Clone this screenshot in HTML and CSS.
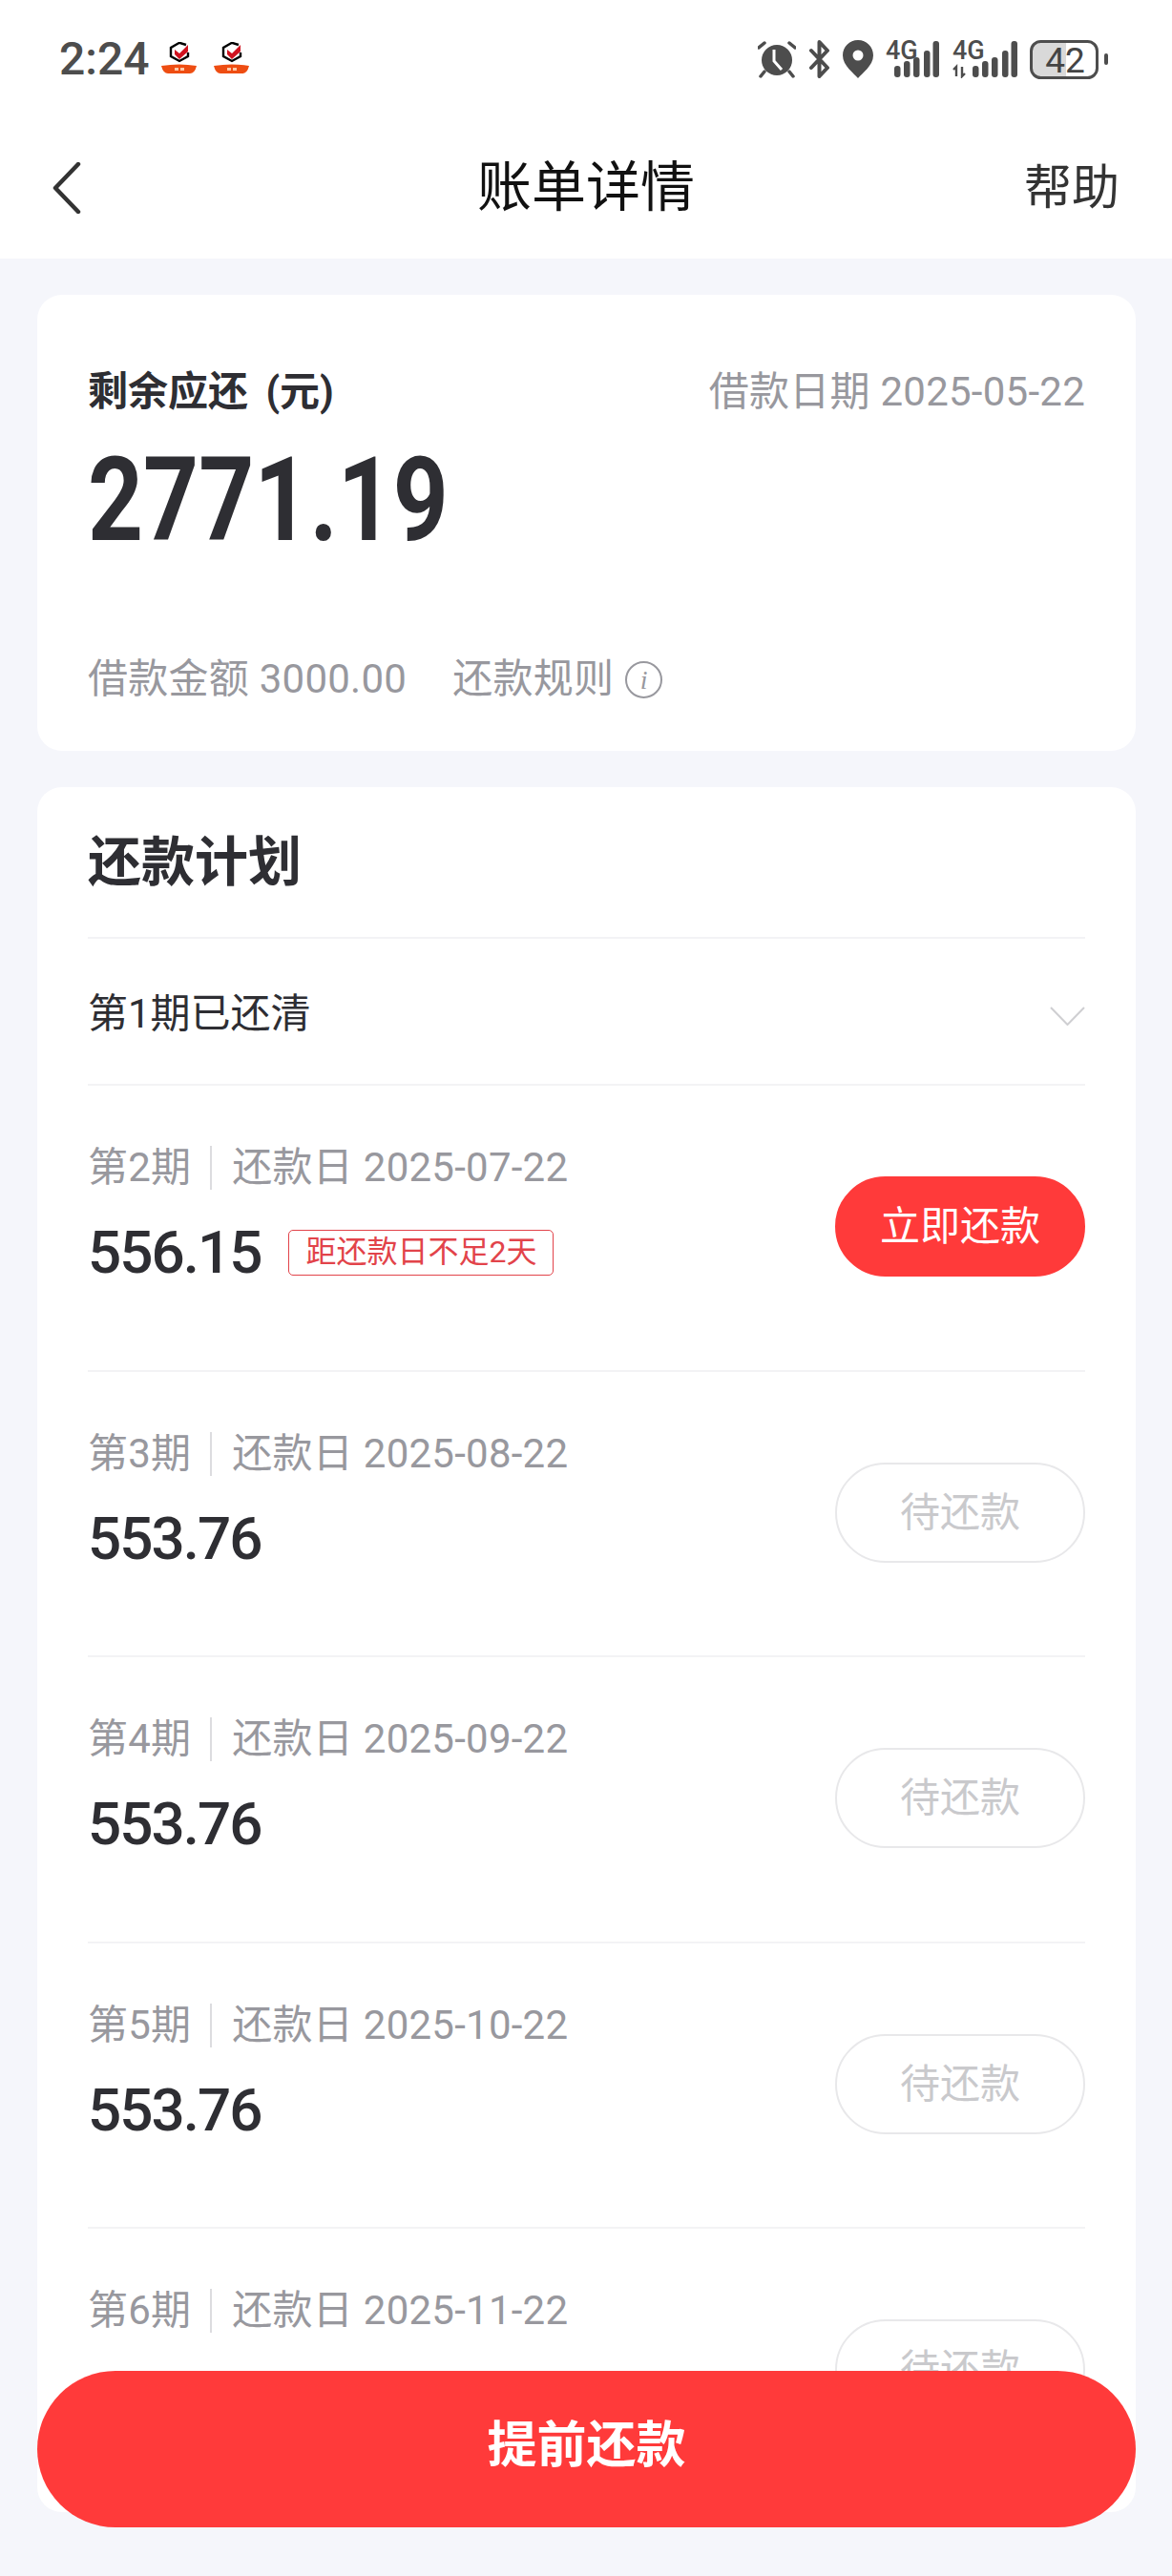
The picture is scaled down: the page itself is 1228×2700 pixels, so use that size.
FILE: index.html
```html
<!DOCTYPE html>
<html lang="zh-CN">
<head>
	<meta charset="UTF-8">
	<title>账单详情</title>
	<link rel="stylesheet" href="styles.css">
</head>
<body>
	<div class="page">
		<div class="head">
			<div class="status">
				<div class="statusLeft">
					<span class="time">2:24</span>
					<svg class="badge" width="38" height="36" viewBox="0 0 38 36">
						<path d="M26 3 19 0.8 10 6V15L19 20 28 15V11" fill="none" stroke="#000" stroke-width="2.4"/>
						<path d="M14 8 19 12 28 3V10L19 18 14 13Z" fill="#d0121f"/>
						<path d="M0 25Q19 22 37 25 35 33 30 33H7Q2 33 0 25Z" fill="#ee4d12"/>
						<path d="M14 27h4v3h-4zM20 27h4v3h-4z" fill="#ffc9a8"/>
					</svg>
					<svg class="badge" width="38" height="36" viewBox="0 0 38 36">
						<path d="M26 3 19 0.8 10 6V15L19 20 28 15V11" fill="none" stroke="#000" stroke-width="2.4"/>
						<path d="M14 8 19 12 28 3V10L19 18 14 13Z" fill="#d0121f"/>
						<path d="M0 25Q19 22 37 25 35 33 30 33H7Q2 33 0 25Z" fill="#ee4d12"/>
						<path d="M14 27h4v3h-4zM20 27h4v3h-4z" fill="#ffc9a8"/>
					</svg>
				</div>
				<div class="statusRight">
					<svg width="40" height="40" viewBox="0 0 40 40">
						<circle cx="20" cy="21" r="16" fill="#4d4d4d"/>
						<path d="M17 10V22L25 31" fill="none" stroke="#fff" stroke-width="3"/>
						<path d="M1 8 7 3M33 3 39 8M7 33 3 38M33 33 37 38" fill="none" stroke="#4d4d4d" stroke-width="3.5" stroke-linecap="round"/>
					</svg>
					<svg width="23" height="40" viewBox="0 0 23 40">
						<path d="M3 11 20 29 11.5 38V2L20 11 3 29" fill="none" stroke="#4d4d4d" stroke-width="4" stroke-linejoin="round" stroke-linecap="round"/>
					</svg>
					<svg width="32" height="40" viewBox="0 0 32 40">
						<path d="M16 0C7 0 0 7 0 16 0 27 12 35 16 40 20 35 32 27 32 16 32 7 25 0 16 0Z" fill="#4d4d4d"/>
						<circle cx="16" cy="16" r="5.500" fill="#fff"/>
					</svg>
					<svg class="net" width="56" height="50" viewBox="0 -10 56 50">
						<text class="netText" x="0" y="20">4G</text>
						<rect x="9" y="27" width="6.500" height="12" rx="3" fill="#4d4d4d"/>
						<rect x="19" y="22" width="6.500" height="17" rx="3" fill="#4d4d4d"/>
						<rect x="29" y="18" width="6.500" height="21" rx="3" fill="#4d4d4d"/>
						<rect x="40" y="11" width="6.500" height="28" rx="3" fill="#4d4d4d"/>
						<rect x="49.500" y="1" width="6.500" height="38" rx="3" fill="#4d4d4d"/>
					</svg>
					<svg class="net" width="69" height="50" viewBox="0 -10 69 50">
						<text class="netText" x="1" y="20">4G</text>
						<path d="M5 38V28L2 31M11 28V38L14 35" fill="none" stroke="#4d4d4d" stroke-width="2.400"/>
						<rect x="22" y="27" width="6.500" height="12" rx="3" fill="#4d4d4d"/>
						<rect x="32" y="22" width="6.500" height="17" rx="3" fill="#4d4d4d"/>
						<rect x="42" y="18" width="6.500" height="21" rx="3" fill="#4d4d4d"/>
						<rect x="53" y="11" width="6.500" height="28" rx="3" fill="#4d4d4d"/>
						<rect x="62.500" y="1" width="6.500" height="38" rx="3" fill="#4d4d4d"/>
					</svg>
					<svg width="82" height="41" viewBox="0 0 82 41">
						<path d="M11 2H38V39H11A9 9 0 0 1 2 30V11A9 9 0 0 1 11 2Z" fill="#d9d9d9"/>
						<rect x="1.500" y="1.500" width="69" height="38" rx="10" fill="none" stroke="#4d4d4d" stroke-width="3"/>
						<text class="batText" x="37" y="33.500" text-anchor="middle">42</text>
						<rect x="78" y="14" width="4" height="12" rx="2" fill="#4d4d4d"/>
					</svg>
				</div>
			</div>
			<div class="nav">
				<svg class="back" width="30" height="54" viewBox="0 0 30 54">
					<path d="M27 2 3 27 27 52" fill="none" stroke="#333" stroke-width="4.500" stroke-linecap="round" stroke-linejoin="round"/>
				</svg>
				<div class="navTitle">账单详情</div>
				<div class="navHelp">帮助</div>
			</div>
		</div>

		<div class="main">
			<div class="card sumCard">
				<div class="sumTop">
					<span class="sumLabel">剩余应还 (元)</span>
					<span class="gray">借款日期 2025-05-22</span>
				</div>
				<div class="sumNum">2771.19</div>
				<div class="sumBottom">
					<span class="gray">借款金额 3000.00</span>
					<span class="gray rule">还款规则</span>
					<span class="info">i</span>
				</div>
			</div>

			<div class="card planCard">
				<div class="planTitle">还款计划</div>
				<div class="foldRow">
					<span>第1期已还清</span>
					<svg class="fold" width="37" height="20" viewBox="0 0 37 20">
						<path d="M1 1 18.500 19 36 1" fill="none" stroke="#cfcfd2" stroke-width="2"/>
					</svg>
				</div>

				<div class="row">
					<div class="rowLeft">
						<div class="rowLabel gray">第2期<i class="sep"></i>还款日 2025-07-22</div>
						<div class="rowAmount"><b>556.15</b><span class="tag">距还款日不足2天</span></div>
					</div>
					<div class="rowBtn on">立即还款</div>
				</div>
				<div class="row">
					<div class="rowLeft">
						<div class="rowLabel gray">第3期<i class="sep"></i>还款日 2025-08-22</div>
						<div class="rowAmount"><b>553.76</b></div>
					</div>
					<div class="rowBtn">待还款</div>
				</div>
				<div class="row">
					<div class="rowLeft">
						<div class="rowLabel gray">第4期<i class="sep"></i>还款日 2025-09-22</div>
						<div class="rowAmount"><b>553.76</b></div>
					</div>
					<div class="rowBtn">待还款</div>
				</div>
				<div class="row">
					<div class="rowLeft">
						<div class="rowLabel gray">第5期<i class="sep"></i>还款日 2025-10-22</div>
						<div class="rowAmount"><b>553.76</b></div>
					</div>
					<div class="rowBtn">待还款</div>
				</div>
				<div class="row">
					<div class="rowLeft">
						<div class="rowLabel gray">第6期<i class="sep"></i>还款日 2025-11-22</div>
						<div class="rowAmount"><b>553.76</b></div>
					</div>
					<div class="rowBtn">待还款</div>
				</div>
			</div>
		</div>

		<div class="payBtn">提前还款</div>
	</div>
</body>
</html>
```
FILE: styles.css
```css
*{box-sizing: border-box;}
body{margin: 0;background: #f5f6fb;font-family: Roboto, "Noto Sans CJK SC", sans-serif;color: #2e2e33;}
.page{width: 1228px;height: 2700px;position: relative;overflow: hidden;}

.head{background: #fff;height: 271px;}
.status{height: 124px;padding: 0 67px 0 62px;display: flex;justify-content: space-between;align-items: center;color: #4d4d4d;}
.statusLeft{display: flex;align-items: center;}
.time{font-size: 48px;line-height: 60px;font-weight: 500;margin-right: 12px;}
.badge{margin-right: 17px;}
.statusRight{display: flex;align-items: center;gap: 13px;}
.net{margin-top: -10px;}
.netText{font-family: Roboto, sans-serif;font-size: 27px;font-weight: 500;fill: #4d4d4d;}
.batText{font-family: Roboto, sans-serif;font-size: 37px;fill: #444;}

.nav{height: 147px;padding: 0 55px 2px 55px;display: grid;grid-template-columns: 1fr auto 1fr;align-items: center;}
.navTitle{font-size: 57px;line-height: 70px;color: #111;}
.navHelp{font-size: 50px;line-height: 60px;color: #333;text-align: right;}

.main{padding: 38px 38px 0 39px;}
.card{background: #fff;border-radius: 26px;padding: 0 53px 0 53px;}
.gray{font-size: 42px;line-height: 60px;color: #98989e;letter-spacing: .25px;}

.sumCard{height: 478px;padding-top: 72px;}
.sumTop{display: flex;justify-content: space-between;align-items: center;}
.sumLabel{font-size: 42px;line-height: 60px;font-weight: 700;word-spacing: 8px;}
.sumNum{font-size: 122px;line-height: 122px;font-weight: 700;margin-top: 23px;transform: scaleX(.83);transform-origin: left center;}
.sumBottom{display: flex;align-items: center;margin-top: 96px;}
.rule{margin-left: 48px;}
.info{width: 39px;height: 39px;margin-left: 12px;border: 2px solid #98989e;border-radius: 50%;color: #98989e;font-family: "Liberation Serif", serif;font-style: italic;font-size: 28px;line-height: 35px;text-align: center;}

.planCard{height: 1808px;margin-top: 38px;overflow: hidden;}
.planTitle{height: 159px;padding-top: 39px;font-size: 56px;line-height: 80px;font-weight: 700;border-bottom: 2px solid #f3f3f5;}
.foldRow{height: 154px;padding-bottom: 4px;display: flex;justify-content: space-between;align-items: center;font-size: 42px;border-bottom: 2px solid #f3f3f5;}
.fold{margin-top: 14px;}

.row{height: 299.5px;display: flex;justify-content: space-between;align-items: flex-start;border-bottom: 2px solid #f3f3f5;}
.rowLeft{padding-top: 56px;}
.rowLabel{display: flex;align-items: center;white-space: pre;}
.sep{width: 2px;height: 46px;margin: 0 21px 0 20px;background: #dcdcdf;}
.rowAmount{display: flex;align-items: center;height: 70px;margin-top: 24px;}
.rowAmount b{font-size: 62px;line-height: 70px;font-weight: 500;letter-spacing: -2px;}
.tag{height: 48px;margin-left: 29px;padding: 0 17px;border: 1.5px solid #e2434a;border-radius: 5px;color: #e2434a;font-size: 32px;line-height: 45px;}
.rowBtn{width: 262px;height: 105px;margin-top: 95px;border: 2px solid #e8e8ea;border-radius: 53px;color: #c9c9cc;font-size: 42px;line-height: 101px;text-align: center;}
.rowBtn.on{background: #ff3a3a;border-color: #ff3a3a;color: #fff;}

.payBtn{position: absolute;left: 39px;top: 2485px;width: 1151px;height: 164px;border-radius: 82px;background: #ff3a3a;color: #fff;font-size: 52px;font-weight: 700;line-height: 158px;text-align: center;}
```
